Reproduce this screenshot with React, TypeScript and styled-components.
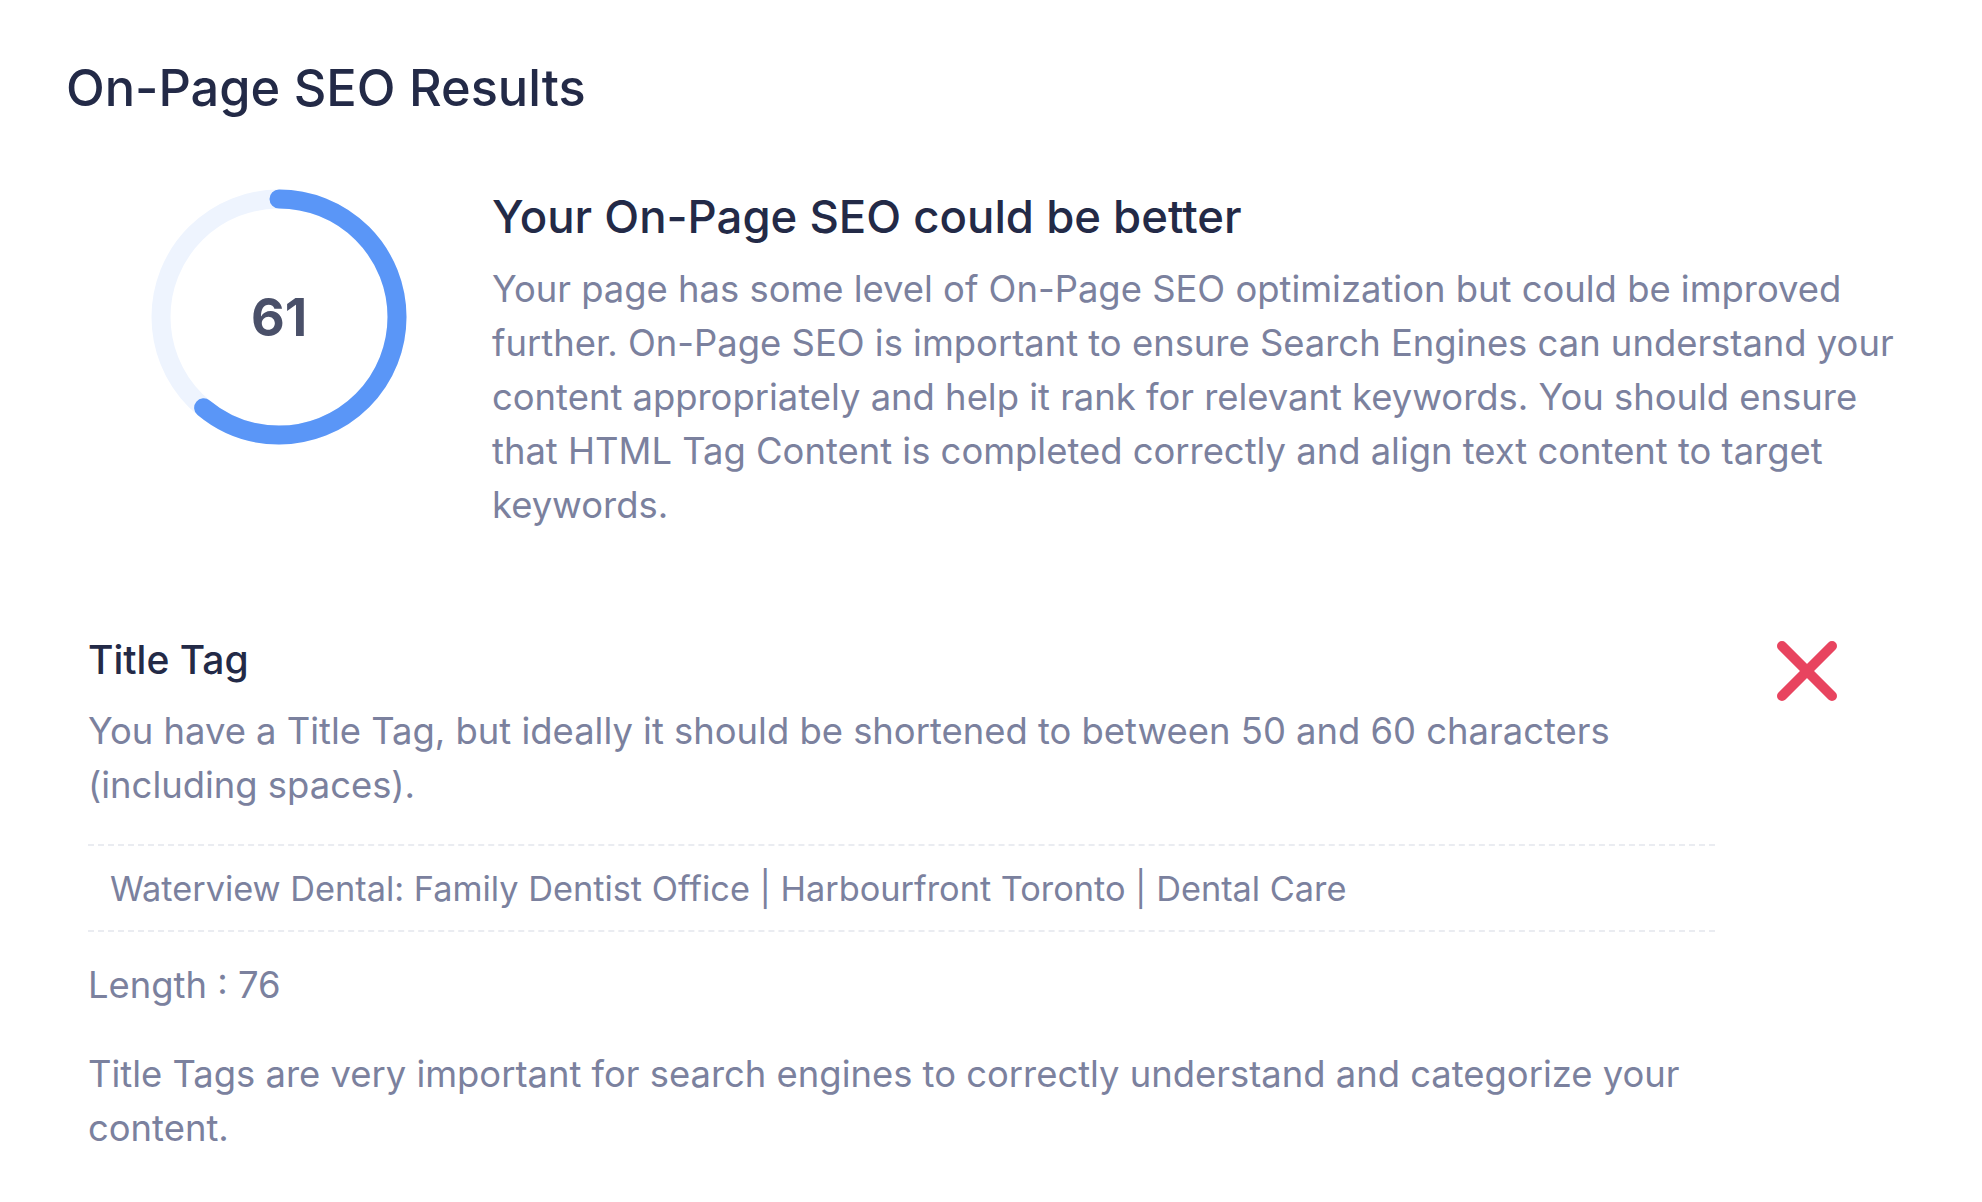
import React from "react";
import styled, { createGlobalStyle } from "styled-components";

const GlobalStyle = createGlobalStyle`
  body {
    margin: 0;
    background: #ffffff;
    font-family: Inter, "Noto Sans", sans-serif;
  }
`;

const Page = styled.div`
  padding: 60px 66px 60px 66px;
  box-sizing: border-box;
  width: 1982px;
`;

const PageTitle = styled.h1`
  margin: 0;
  font-size: 50.5px;
  line-height: 56px;
  font-weight: 500;
  color: #232a47;
`;

const Summary = styled.section`
  display: flex;
  align-items: flex-start;
  margin-top: 73px;
`;

const ScoreColumn = styled.div`
  width: 426px;
  flex-shrink: 0;
  display: flex;
  justify-content: center;
`;

const ScoreRing = styled.div`
  position: relative;
  width: 256px;
  height: 256px;
`;

const ScoreValue = styled.span`
  position: absolute;
  inset: 0;
  display: flex;
  align-items: center;
  justify-content: center;
  font-size: 52px;
  font-weight: 700;
  color: #4a5069;
`;

const SummaryText = styled.div`
  flex: 1;
`;

const Heading = styled.h2`
  margin: 0 0 17px;
  font-size: 45.5px;
  line-height: 56px;
  font-weight: 500;
  color: #232a47;
`;

const Paragraph = styled.p<{ $gap?: number }>`
  margin: ${(p) => p.$gap ?? 0}px 0 0;
  font-size: 36.4px;
  line-height: 54px;
  color: #7b819e;
`;

const CheckRow = styled.section`
  display: flex;
  align-items: flex-start;
  margin-top: 104px;
  padding-left: 22px;
`;

const CheckBody = styled.div`
  width: 1627px;
`;

const CheckTitle = styled.h3`
  margin: 0;
  font-size: 39px;
  line-height: 48px;
  font-weight: 500;
  color: #232a47;
`;

const TagValue = styled.div`
  margin-top: 32px;
  border-top: 2px dashed #eaecf1;
  border-bottom: 2px dashed #eaecf1;
  padding: 16px 22px 14px;
  font-size: 34.3px;
  line-height: 54px;
  color: #7b819e;
`;

const StatusIcon = styled.div`
  margin-left: 60px;
  margin-top: 3px;
  width: 64px;
  height: 64px;
`;

function Ring({ score }: { score: number }) {
  const r = 118;
  const c = 2 * Math.PI * r;
  return (
    <ScoreRing>
      <svg width="256" height="256" viewBox="0 0 256 256">
        <circle cx="128" cy="128" r={r} fill="none" stroke="#eef4fe" strokeWidth="19" />
        <circle
          cx="128"
          cy="128"
          r={r}
          fill="none"
          stroke="#5a96f7"
          strokeWidth="19"
          strokeLinecap="round"
          strokeDasharray={`${(c * score) / 100} ${c}`}
          transform="rotate(-90 128 128)"
        />
      </svg>
      <ScoreValue>{score}</ScoreValue>
    </ScoreRing>
  );
}

function Cross() {
  return (
    <svg width="64" height="64" viewBox="0 0 64 64">
      <g stroke="#e8445f" strokeWidth="10" strokeLinecap="round">
        <line x1="7" y1="7" x2="57" y2="57" />
        <line x1="57" y1="7" x2="7" y2="57" />
      </g>
    </svg>
  );
}

export default function App() {
  return (
    <>
      <GlobalStyle />
      <Page>
        <PageTitle>On-Page SEO Results</PageTitle>
        <Summary>
          <ScoreColumn>
            <Ring score={61} />
          </ScoreColumn>
          <SummaryText>
            <Heading>Your On-Page SEO could be better</Heading>
            <Paragraph>
              Your page has some level of On-Page SEO optimization but could be improved further. On-Page SEO is
              important to ensure Search Engines can understand your content appropriately and help it rank for
              relevant keywords. You should ensure that HTML Tag Content is completed correctly and align text
              content to target keywords.
            </Paragraph>
          </SummaryText>
        </Summary>
        <CheckRow>
          <CheckBody>
            <CheckTitle>Title Tag</CheckTitle>
            <Paragraph $gap={20}>
              You have a Title Tag, but ideally it should be shortened to between 50 and 60 characters (including
              spaces).
            </Paragraph>
            <TagValue>Waterview Dental: Family Dentist Office | Harbourfront Toronto | Dental Care</TagValue>
            <Paragraph $gap={26}>Length : 76</Paragraph>
            <Paragraph $gap={35}>
              Title Tags are very important for search engines to correctly understand and categorize your content.
            </Paragraph>
          </CheckBody>
          <StatusIcon>
            <Cross />
          </StatusIcon>
        </CheckRow>
      </Page>
    </>
  );
}
